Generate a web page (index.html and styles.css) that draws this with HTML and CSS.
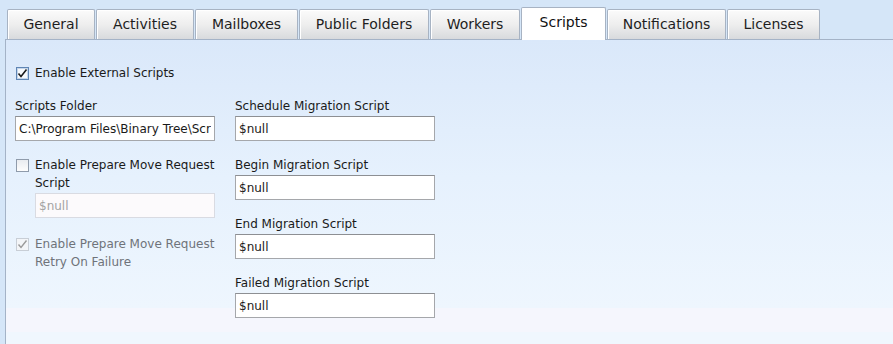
FILE: index.html
```html
<!DOCTYPE html>
<html>
<head>
<meta charset="utf-8">
<link rel="stylesheet" href="styles.css">
</head>
<body>
<div class="strip">
  <div class="tab t-general">General</div>
  <div class="tab t-activities">Activities</div>
  <div class="tab t-mailboxes">Mailboxes</div>
  <div class="tab t-public">Public Folders</div>
  <div class="tab t-workers">Workers</div>
  <div class="tab active t-scripts">Scripts</div>
  <div class="tab t-notifications">Notifications</div>
  <div class="tab t-licenses">Licenses</div>
</div>
<div class="panel">
  <div class="check top-check">
    <span class="box checked"><svg width="11" height="11" viewBox="0 0 11 11"><path d="M1.5 5.5 L4 8.5 L9.5 1.5" fill="none" stroke="#1a1a1a" stroke-width="1.6"/></svg></span>
    <span class="check-text">Enable External Scripts</span>
  </div>
  <div class="cols">
    <div class="col">
      <div class="field">
        <div class="lbl">Scripts Folder</div>
        <input class="input" type="text" value="C:\Program Files\Binary Tree\Scripts" readonly>
      </div>
      <div class="check multi">
        <span class="box"></span>
        <span class="check-text">Enable Prepare Move Request Script</span>
      </div>
      <input class="input sub disabled" type="text" value="$null" disabled>
      <div class="check multi gray">
        <span class="box dis"><svg width="11" height="11" viewBox="0 0 11 11"><path d="M1.5 5.5 L4 8.5 L9.5 1.5" fill="none" stroke="#9a9a9a" stroke-width="1.4"/></svg></span>
        <span class="check-text">Enable Prepare Move Request Retry On Failure</span>
      </div>
    </div>
    <div class="col">
      <div class="field">
        <div class="lbl">Schedule Migration Script</div>
        <input class="input" type="text" value="$null" readonly>
      </div>
      <div class="field">
        <div class="lbl">Begin Migration Script</div>
        <input class="input" type="text" value="$null" readonly>
      </div>
      <div class="field">
        <div class="lbl">End Migration Script</div>
        <input class="input" type="text" value="$null" readonly>
      </div>
      <div class="field">
        <div class="lbl">Failed Migration Script</div>
        <input class="input" type="text" value="$null" readonly>
      </div>
    </div>
  </div>
</div>
</body>
</html>
```

FILE: styles.css
```css
html, body {
  margin: 0;
  padding: 0;
  height: 344px;
  overflow: hidden;
}
body {
  background: #d5e6f8;
  font-family: "DejaVu Sans", Verdana, sans-serif;
  font-size: 12px;
  color: #1a1a1a;
}
.strip {
  display: flex;
  align-items: flex-end;
  gap: 1px;
  height: 39px;
  padding-left: 7px;
  box-sizing: border-box;
  position: relative;
  z-index: 2;
}
.tab {
  box-sizing: border-box;
  height: 30px;
  border: 1px solid #a7b3c3;
  border-bottom: none;
  border-radius: 2px 2px 0 0;
  background: linear-gradient(#fbfbfb, #eeeeee 50%, #d8dadd);
  box-shadow: inset 1px 1px 0 #ffffff;
  font-size: 14px;
  line-height: 29px;
  text-align: center;
  color: #1e1e1e;
  white-space: nowrap;
}
.tab.active {
  height: 33px;
  margin-bottom: -1px;
  background: #ffffff;
  box-shadow: none;
  line-height: 28px;
  color: #111;
}
.t-general { width: 88px; }
.t-activities { width: 98px; }
.t-mailboxes { width: 103px; }
.t-public { width: 130px; }
.t-workers { width: 90px; }
.t-scripts { width: 85px; }
.t-notifications { width: 119px; }
.t-licenses { width: 93px; }

.panel {
  margin-left: 5px;
  height: 305px;
  box-sizing: border-box;
  border-top: 1px solid #a4b3c7;
  border-left: 1px solid #a4b3c7;
  background: linear-gradient(#dae8fa, #e6f1fd 45%, #eef6fe 88%, #f5f6fd 88%, #f5f6fd 96%, #f0f7fe 96%);
  padding: 24px 0 0 9px;
  position: relative;
  z-index: 1;
}
.check {
  display: flex;
  align-items: flex-start;
  line-height: 18px;
}
.box {
  flex: none;
  box-sizing: border-box;
  width: 13px;
  height: 13px;
  margin: 3px 6px 0 1px;
  border: 1px solid #8f9bab;
  background: linear-gradient(#e9ecf0, #fdfdfd);
  display: flex;
  align-items: center;
  justify-content: center;
}
.box.checked {
  border-color: #5f85b4;
  background: #f7f9fc;
  box-shadow: inset 0 0 0 1px #c5d6ea;
}
.box.dis {
  border-color: #c8ced6;
  background: #f3f5f8;
}
.cols {
  display: grid;
  grid-template-columns: 200px 200px;
  column-gap: 20px;
  margin-top: 15px;
}
.col {
  display: flex;
  flex-direction: column;
}
.field {
  margin-bottom: 15px;
}
.lbl {
  line-height: 18px;
  margin-bottom: 1px;
  white-space: nowrap;
}
.input {
  display: block;
  box-sizing: border-box;
  width: 200px;
  height: 25px;
  margin: 0;
  padding: 0 3px;
  border: 1px solid #a5a7ab;
  border-top-color: #8d8f93;
  background: #ffffff;
  font-family: "DejaVu Sans", Verdana, sans-serif;
  font-size: 12px;
  color: #1a1a1a;
  outline: none;
}
.check.multi .check-text {
  width: 180px;
}
.input.sub {
  width: 180px;
  margin: 1px 0 0 20px;
}
.input.disabled {
  background: #fcfafc;
  border-color: #d9dbe2;
  color: #a3a3a3;
}
.check.gray {
  margin-top: 17px;
  color: #6f737a;
}
```
